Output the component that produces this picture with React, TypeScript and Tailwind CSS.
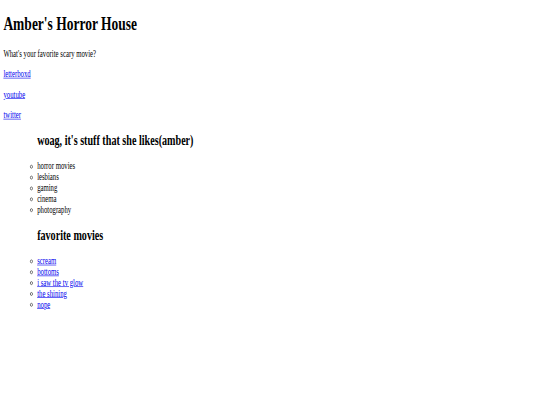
export default function App() {
  const likes = ["horror movies", "lesbians", "gaming", "cinema", "photography"];
  const movies = ["scream", "bottoms", "i saw the tv glow", "the shining", "nope"];
  const link = "text-[#0000EE] underline";
  return (
    <div className="w-[540px] h-[405px] overflow-hidden bg-white">
      <div
        className="w-[1280px] h-[672px] origin-top-left [transform:scale(0.421875,0.603)] px-2 pt-[21.44px] text-black text-[16px] leading-[normal] flow-root"
        style={{ fontFamily: '"Liberation Serif", "Times New Roman", serif' }}
      >
        <h1 className="text-[32px] font-bold mt-0 mb-[21.44px]">Amber's Horror House</h1>
        <p className="my-4">What's your favorite scary movie?</p>
        <p className="my-4">
          <a className={link} href="#">letterboxd</a>
        </p>
        <p className="my-4">
          <a className={link} href="#">youtube</a>
        </p>
        <p className="my-4">
          <a className={link} href="#">twitter</a>
        </p>
        <div className="pl-10 my-4">
          <div className="pl-10">
            <h2 className="text-[24px] font-bold my-[19.92px]">woag, it's stuff that she likes(amber)</h2>
            <ul className="list-[circle] pl-0 m-0">
              {likes.map((l) => (
                <li key={l}>{l}</li>
              ))}
            </ul>
            <h2 className="text-[24px] font-bold my-[19.92px]">favorite movies</h2>
            <ul className="list-[circle] pl-0 m-0">
              {movies.map((m) => (
                <li key={m}>
                  <a className={link} href="#">{m}</a>
                </li>
              ))}
            </ul>
          </div>
        </div>
      </div>
    </div>
  );
}
